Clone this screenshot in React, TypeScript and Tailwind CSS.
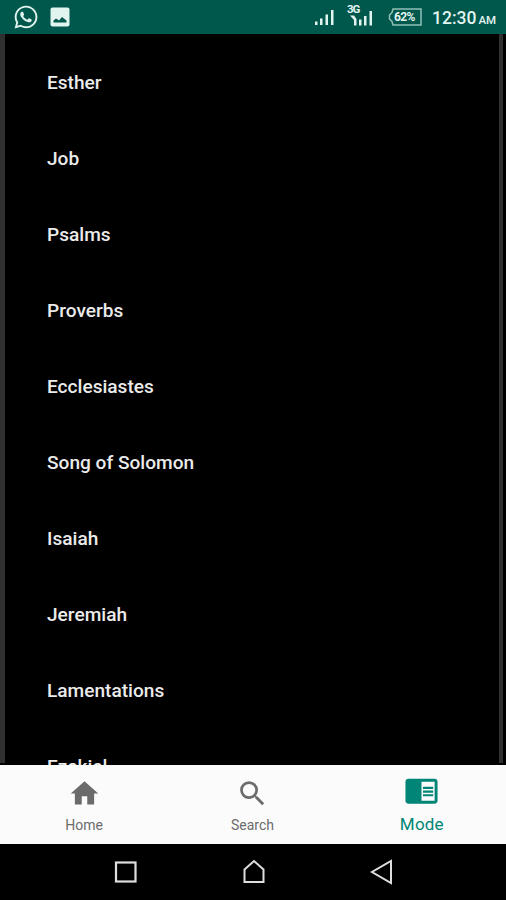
import React, { useState } from 'react';
import { FaWhatsapp } from 'react-icons/fa';

const books = [
  'Esther',
  'Job',
  'Psalms',
  'Proverbs',
  'Ecclesiastes',
  'Song of Solomon',
  'Isaiah',
  'Jeremiah',
  'Lamentations',
  'Ezekiel',
];

const tabs = [
  {
    label: 'Home',
    path: 'M10 20v-6h4v6h5v-8h3L12 3 2 12h3v8z',
  },
  {
    label: 'Search',
    path: 'M15.5 14h-.79l-.28-.27A6.47 6.47 0 0 0 16 9.5 6.5 6.5 0 1 0 9.5 16c1.61 0 3.09-.59 4.23-1.57l.27.28v.79l5 4.99L20.49 19l-4.99-5zm-6 0C7.01 14 5 11.99 5 9.5S7.01 5 9.5 5 14 7.01 14 9.5 11.99 14 9.5 14z',
  },
  {
    label: 'Mode',
    path: 'M13 12h7v1.5h-7zm0-2.5h7V11h-7zm0 5h7V16h-7zM21 4H3c-1.1 0-2 .9-2 2v13c0 1.1.9 2 2 2h18c1.1 0 2-.9 2-2V6c0-1.1-.9-2-2-2zm0 15h-9V6h9v13z',
  },
];

const StatusBar: React.FC = () => (
  <header className="flex h-[34px] shrink-0 items-center bg-[#00574b] pl-[13px] pr-[9px] text-[#e2f4f0]">
    <FaWhatsapp size={26} />
    <svg className="ml-[11px]" width="20" height="20" viewBox="0 0 20 20">
      <rect x="0.5" y="0.5" width="19" height="19" rx="2" fill="currentColor" />
      <path d="M3.5 15.5v-2l2.500-2 3 2 3-3.500 4.500 3.500v2z" fill="#00574b" />
    </svg>

    {/* signal of the two SIM cards */}
    <svg className="ml-auto" width="20" height="17" viewBox="0 0 20 17" fill="currentColor">
      <path d="M0 12.500h2.500V16H0zM5 9.500h2.500V16H5zM10.500 5.500H13V16h-2.500zM16 1h2.500v15H16z" />
    </svg>
    <div className="ml-[12px] flex h-[25px] w-[28px] flex-col">
      <span className="h-[10px] font-['Roboto'] text-[11.5px] font-bold leading-[9px] tracking-[-1px]">3G</span>
      <svg className="overflow-visible" width="26" height="14" viewBox="0 0 26 14" fill="currentColor">
        <path d="M3 0.500h4L9.500 4v6.500H7V5zM12 4.500h2.500v6H12zM17 1h2.500v9.500H17zM22.500 -4H25v14.500h-2.500z" />
      </svg>
    </div>
    <div className="relative ml-[13px] h-[18px] w-[34px]">
      <svg width="34" height="18" viewBox="0 0 34 18" fill="none" stroke="#8fc0b7" strokeWidth="1.5">
        <path d="M5 1h28v16H5l-1-3.500L1.500 11V7L4 4.500z" />
      </svg>
      <span className="absolute left-[6px] top-0 font-['Roboto'] text-[12px] font-bold leading-[18px] tracking-[-0.6px]">62%</span>
    </div>
    <span className="ml-[10px] w-[65px] whitespace-nowrap pt-[3px] font-['Roboto'] text-[17.5px] font-medium leading-[34px]">
      12:30<span className="ml-[2px] text-[11.5px]">AM</span>
    </span>
  </header>
);

const SystemButtons: React.FC = () => (
  <footer className="flex h-[56px] shrink-0 items-center justify-center gap-[104px] bg-black pl-[2px]">
    <svg width="24" height="24" viewBox="0 0 24 24" fill="none" stroke="#dedede" strokeWidth="2.2">
      <rect x="2" y="2.5" width="19.5" height="19" />
    </svg>
    <svg width="24" height="26" viewBox="0 0 24 26" fill="none" stroke="#dedede" strokeWidth="2">
      <path d="M2.5 10.5L12 2l9.5 8.5v12.5h-19z" />
    </svg>
    <svg width="24" height="26" viewBox="0 0 24 26" fill="none" stroke="#dedede" strokeWidth="2">
      <path d="M21 2v22L2 13z" />
    </svg>
  </footer>
);

const App: React.FC = () => {
  const [activeTab, setActiveTab] = useState('Mode');

  return (
    <div className="flex h-[900px] w-[506px] flex-col overflow-hidden bg-black font-['Roboto',sans-serif]">
      <StatusBar />

      <main className="flex h-[731px] shrink-0 overflow-hidden bg-black">
        <div className="h-[729px] w-[5px] shrink-0 bg-[#303030]" />
        <ul className="flex-1 pt-[11px]">
          {books.map((book) => (
            <li
              key={book}
              className="flex h-[76px] items-center pl-[42px] text-[19.1px] font-medium text-[#ebebeb]"
            >
              {book}
            </li>
          ))}
        </ul>
        <div className="mr-[3px] h-[729px] w-[4px] shrink-0 bg-[#303030]" />
      </main>

      <nav className="flex h-[79px] shrink-0 bg-[#fbfbfb]">
        {tabs.map((tab) => {
          const active = tab.label === activeTab;
          return (
            <button
              key={tab.label}
              onClick={() => setActiveTab(tab.label)}
              className={`flex flex-1 flex-col items-center ${active ? 'pl-px pt-[8px] text-[#008577]' : 'pt-[12px] text-[#6b6b6b]'}`}
            >
              <svg
                width={active ? 35 : 33}
                height={active ? 35 : 33}
                viewBox="0 0 24 24"
                fill="currentColor"
              >
                <path d={tab.path} />
              </svg>
              <span
                className={
                  active
                    ? 'mt-[6px] text-[17px] leading-[20px] tracking-[0.2px]'
                    : 'mt-[5px] text-[14px] leading-[20px]'
                }
              >
                {tab.label}
              </span>
            </button>
          );
        })}
      </nav>

      <SystemButtons />
    </div>
  );
};

export default App;
